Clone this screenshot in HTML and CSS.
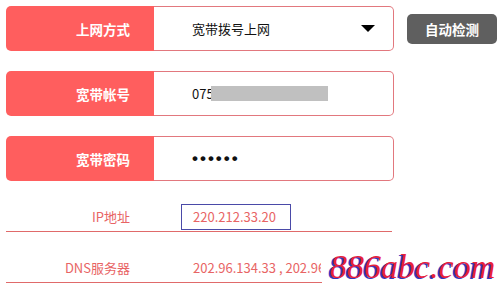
FILE: index.html
```html
<!DOCTYPE html>
<html lang="zh-CN">
<head>
<meta charset="utf-8">
<title>上网设置</title>
<link rel="stylesheet" href="styles.css">
</head>
<body>
<div class="page">
  <div class="form-row">
    <div class="field">
      <div class="field-label">上网方式</div>
      <div class="field-input select">
        <span class="value">宽带拨号上网</span>
        <span class="caret"></span>
      </div>
    </div>
    <button class="btn-detect">自动检测</button>
  </div>
  <div class="form-row">
    <div class="field">
      <div class="field-label">宽带帐号</div>
      <div class="field-input">
        <span class="value">075</span><span class="mask"></span>
      </div>
    </div>
  </div>
  <div class="form-row">
    <div class="field">
      <div class="field-label">宽带密码</div>
      <div class="field-input">
        <span class="value dots">••••••</span>
      </div>
    </div>
  </div>
  <div class="info-row">
    <div class="info-label">IP地址</div>
    <div class="info-value boxed">220.212.33.20</div>
  </div>
  <div class="info-row">
    <div class="info-label">DNS服务器</div>
    <div class="info-value clipped">202.96.134.33 , 202.96.128.86</div>
  </div>
</div>
<div class="watermark">886abc.com</div>
</body>
</html>
```
FILE: styles.css
```css
html, body {
  margin: 0;
  padding: 0;
  background: #ffffff;
  width: 501px;
  height: 285px;
  overflow: hidden;
  position: relative;
  font-family: "Noto Sans CJK SC", "Noto Sans", sans-serif;
}

.page {
  padding: 6px 0 0 6px;
  display: flex;
  flex-direction: column;
}

.form-row {
  display: flex;
  align-items: center;
  gap: 13px;
  height: 45px;
  margin-bottom: 20px;
}

.form-row:nth-child(3) {
  margin-bottom: 0;
}

.field {
  display: flex;
  height: 45px;
}

.field-label {
  width: 148px;
  box-sizing: border-box;
  background: #ff5e5e;
  color: #ffffff;
  font-weight: bold;
  font-size: 13.5px;
  border-radius: 5px 0 0 5px;
  display: flex;
  align-items: center;
  justify-content: flex-end;
  padding-right: 24px;
}

.field-input {
  width: 240px;
  box-sizing: border-box;
  border: 1px solid #e2787e;
  border-left: none;
  border-radius: 0 5px 5px 0;
  display: flex;
  align-items: center;
  padding-left: 38px;
  padding-right: 18px;
  font-size: 13px;
  color: #111111;
}

.select .value {
  flex: 1;
}

.caret {
  width: 0;
  height: 0;
  border-left: 7px solid transparent;
  border-right: 7px solid transparent;
  border-top: 7px solid #000000;
}

.mask {
  display: inline-block;
  width: 117px;
  height: 15px;
  background: #c0c0c0;
  margin-left: -3px;
}

.dots {
  font-family: "Liberation Sans", sans-serif;
  font-size: 17px;
  font-weight: bold;
  letter-spacing: 2px;
}

.btn-detect {
  width: 90px;
  height: 30px;
  border: none;
  border-radius: 5px;
  background: #5f5f5f;
  color: #ffffff;
  font-family: "Noto Sans CJK SC", sans-serif;
  font-weight: bold;
  font-size: 13.5px;
  padding: 0;
}

.info-row {
  width: 386px;
  height: 51px;
  box-sizing: border-box;
  border-bottom: 1px solid #e06a6a;
  display: flex;
  align-items: flex-end;
  padding-bottom: 1px;
  font-size: 13px;
  color: #e86464;
}

.info-label {
  width: 124px;
  text-align: right;
  height: 26px;
  line-height: 26px;
  flex-shrink: 0;
}

.info-value {
  margin-left: 51px;
  height: 26px;
  line-height: 24px;
  box-sizing: border-box;
  padding-left: 11px;
  border: 1px solid transparent;
  white-space: nowrap;
}

.info-value.boxed {
  width: 110px;
  border-color: #4a4aa8;
}

.info-value.clipped {
  width: 141px;
  overflow: hidden;
}

.watermark {
  position: absolute;
  left: 322px;
  top: 247px;
  width: 179px;
  height: 38px;
  background: #ffffff;
  box-sizing: border-box;
  padding-left: 8px;
  font-family: "Liberation Serif", serif;
  font-style: italic;
  font-size: 34px;
  line-height: 40px;
  color: #e8203c;
  text-shadow: -2px 1px 0 #3535c0;
  white-space: nowrap;
}
```
